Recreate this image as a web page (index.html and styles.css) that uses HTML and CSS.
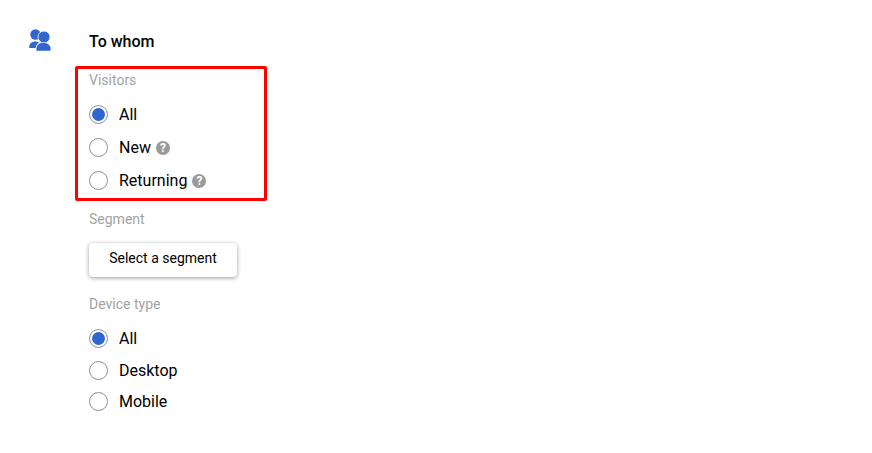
FILE: index.html
```html
<!DOCTYPE html>
<html lang="en">
<head>
<meta charset="UTF-8" />
<meta name="viewport" content="width=device-width, initial-scale=1" />
<title>To whom</title>
<link rel="stylesheet" href="styles.css">
</head>
<body>

<div class="page">
  <div class="side-icon">
    <svg width="22" height="22" viewBox="0 0 22 22" aria-hidden="true">
      <circle cx="6.500" cy="5.500" r="5.200" fill="#2f66d0"/>
      <path d="M.3 19v-1.400c0-3 2.500-5.200 6-5.200 1.500 0 2.800.3 3.900 1-2 1.200-3.300 3-3.600 5.600z" fill="#2f66d0"/>
      <circle cx="15" cy="8" r="6" fill="#2f66d0" stroke="#fff" stroke-width=".8"/>
      <path d="M7.200 22v-2.500c0-3.300 3-6 7.100-6s7.500 2.700 7.500 6V22z" fill="#2f66d0" stroke="#fff" stroke-width=".5"/>
    </svg>
  </div>

  <div class="content">
    <h2 class="title">To whom</h2>

    <div class="highlight">
      <div class="group-label">Visitors</div>
      <div class="radio-list">
        <label class="radio-row">
          <span class="radio checked"></span>All
        </label>
        <label class="radio-row">
          <span class="radio"></span>New
          <span class="help">?</span>
        </label>
        <label class="radio-row">
          <span class="radio"></span>Returning
          <span class="help">?</span>
        </label>
      </div>
    </div>

    <div class="group-label segment-label">Segment</div>
    <button class="btn-segment" type="button">Select a segment</button>

    <div class="group-label device-label">Device type</div>
    <div class="radio-list device-list">
      <label class="radio-row">
        <span class="radio checked"></span>All
      </label>
      <label class="radio-row">
        <span class="radio"></span>Desktop
      </label>
      <label class="radio-row">
        <span class="radio"></span>Mobile
      </label>
    </div>
  </div>
</div>

</body>
</html>
```

FILE: styles.css
```css
body {
  margin: 0;
  background: #fff;
  font-family: Roboto, 'Liberation Sans', sans-serif;
  color: #000;
}

.page {
  display: flex;
  padding: 29px 0 0 29px;
}

.side-icon {
  width: 60px;
  flex-shrink: 0;
  line-height: 0;
}

.title {
  margin: 3px 0 15px;
  font-size: 16px;
  font-weight: 500;
  line-height: 19px;
}

/* Red box around the visitors group */
.highlight {
  width: 164px;
  height: 126px;
  margin-left: -14px;
  padding: 3px 11px 0;
  border: 3px solid #f00;
  border-radius: 2px;
}

.group-label {
  font-size: 14px;
  line-height: 16px;
  color: #a3a3a3;
}

.radio-list {
  display: flex;
  flex-direction: column;
  gap: 14px;
  margin-top: 17px;
}

.radio-row {
  display: flex;
  align-items: center;
  height: 19px;
  font-size: 16px;
}

.radio {
  width: 19px;
  height: 19px;
  box-sizing: border-box;
  margin-right: 11px;
  border: 1px solid #8f8f8f;
  border-radius: 50%;
  background: #fff;
  flex-shrink: 0;
}
.radio.checked {
  padding: 2px;
  background: #2f66d0;
  background-clip: content-box;
}

.help {
  width: 14px;
  height: 14px;
  margin-left: 5px;
  border-radius: 50%;
  background: #9a9a9a;
  color: #fff;
  font-size: 12px;
  font-weight: 700;
  line-height: 14px;
  text-align: center;
}

.segment-label {
  margin-top: 10px;
}

.btn-segment {
  display: block;
  width: 148px;
  height: 34px;
  margin-top: 16px;
  padding: 0 0 4px;
  border: none;
  border-radius: 4px;
  background: #fff;
  box-shadow: 0 1px 4px rgb(0 0 0 / 0.4);
  font-family: inherit;
  font-size: 14px;
  color: #000;
}

.device-label {
  margin-top: 19px;
}

.device-list {
  gap: 12.5px;
  margin-top: 17px;
}
```
